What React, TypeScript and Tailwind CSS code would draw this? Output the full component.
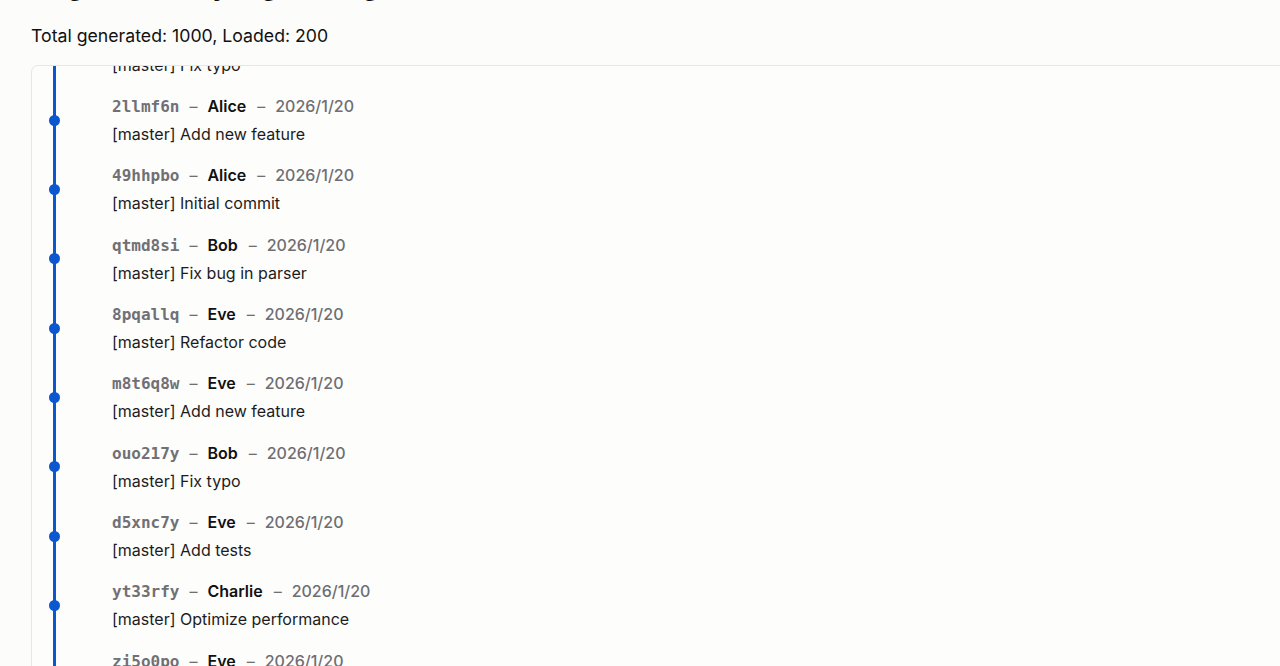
import React from "react";

type Commit = { hash: string; author: string; date: string; msg: string };

const commits: Commit[] = [
  { hash: "k3p9x2a", author: "Bob", date: "2026/1/20", msg: "[master] Fix typo" },
  { hash: "2llmf6n", author: "Alice", date: "2026/1/20", msg: "[master] Add new feature" },
  { hash: "49hhpbo", author: "Alice", date: "2026/1/20", msg: "[master] Initial commit" },
  { hash: "qtmd8si", author: "Bob", date: "2026/1/20", msg: "[master] Fix bug in parser" },
  { hash: "8pqallq", author: "Eve", date: "2026/1/20", msg: "[master] Refactor code" },
  { hash: "m8t6q8w", author: "Eve", date: "2026/1/20", msg: "[master] Add new feature" },
  { hash: "ouo217y", author: "Bob", date: "2026/1/20", msg: "[master] Fix typo" },
  { hash: "d5xnc7y", author: "Eve", date: "2026/1/20", msg: "[master] Add tests" },
  { hash: "yt33rfy", author: "Charlie", date: "2026/1/20", msg: "[master] Optimize performance" },
  { hash: "zi5o0po", author: "Eve", date: "2026/1/20", msg: "[master] Update docs" },
];

function Row({ c }: { c: Commit }) {
  return (
    <div className="flex h-[69.33px] shrink-0">
      <div className="relative w-[80px] shrink-0">
        <div className="absolute left-[16.5px] top-[30.5px] h-[11px] w-[11px] rounded-full bg-[#0b57d0]" />
      </div>
      <div className="flex flex-col pt-[10px]">
        <div className="flex h-[24px] items-baseline whitespace-nowrap text-[16px] leading-[24px]">
          <span className="font-['DejaVu_Sans_Mono',monospace] text-[16px] font-bold text-[#707075]">{c.hash}</span>
          <span className="ml-[10px] mr-[10px] text-[#6e6e73]">–</span>
          <span className="font-semibold text-[#111]">{c.author}</span>
          <span className="ml-[11px] mr-[10px] text-[#6e6e73]">–</span>
          <span className="font-medium text-[#6e6e73]">{c.date}</span>
        </div>
        <div className="mt-[4px] whitespace-nowrap text-[16px] leading-[24px] text-[#1c1c1e]">{c.msg}</div>
      </div>
    </div>
  );
}

export default function App() {
  return (
    <div className="h-[666px] overflow-hidden bg-[#fcfcfb] pl-[31px] font-['Inter','Noto_Sans',sans-serif]">
      <h2 className="mt-[-26px] whitespace-nowrap text-[24px] font-bold leading-[28px] text-[#111]">
        Large Git History Log Viewing
      </h2>
      <p className="mt-[22px] whitespace-nowrap text-[17.7px] leading-[24px] text-[#111]">
        Total generated: 1000, Loaded: 200
      </p>
      <div className="relative mt-[17px] h-[700px] w-[1300px] overflow-hidden rounded-tl-[7px] border border-[#e6e6e6] bg-[#fdfdfc]">
        <div className="absolute left-[21px] top-0 h-full w-[3px] bg-[#0b57d0]" />
        <div className="mt-[-51.3px] flex flex-col">
          {commits.map((c, i) => (
            <Row key={i} c={c} />
          ))}
        </div>
      </div>
    </div>
  );
}
